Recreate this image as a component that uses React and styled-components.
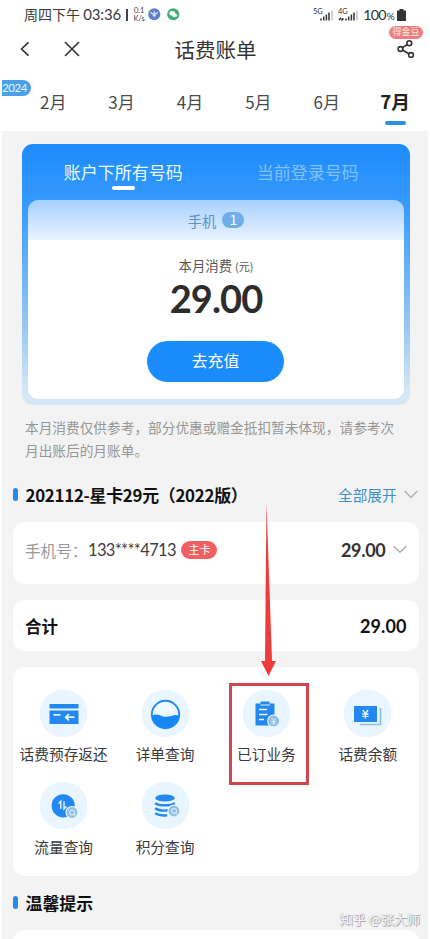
import React, { useState } from 'react';
import styled, { createGlobalStyle } from 'styled-components';

const GlobalStyle = createGlobalStyle`
  * {
    box-sizing: border-box;
  }
  body {
    margin: 0;
    background: #fff;
    font-family: 'Noto Sans CJK SC', sans-serif;
    color: #333;
  }
  button {
    font-family: inherit;
    border: 0;
    padding: 0;
    background: none;
  }
`;

const Page = styled.div`
  position: relative;
  width: 430px;
  height: 939px;
  overflow: hidden;
  background: #fff;
`;

const StatusBar = styled.div`
  display: flex;
  align-items: center;
  height: 29px;
  padding: 0 24px 0 24px;
`;

const Clock = styled.span`
  font-size: 14px;
  line-height: 29px;
  white-space: nowrap;
  color: #3c3c3c;

  b {
    font: 400 15px 'Lato', sans-serif;
    letter-spacing: -0.1px;
  }
`;

const Divider = styled.span`
  width: 1.5px;
  height: 12px;
  margin: 0 5.5px 0 5px;
  background: #444;
`;

const Speed = styled.span`
  display: flex;
  flex-direction: column;
  align-items: center;
  width: 12px;
  margin-right: 3px;
  font: 7.5px/7.5px 'Lato', sans-serif;
  color: #444;
`;

const StatusDot = styled.svg`
  width: 12.5px;
  height: 12.5px;
  margin-right: 6.5px;
`;

const StatusRight = styled.div`
  display: flex;
  align-items: center;
  margin-left: auto;
`;

const Signal = styled.svg`
  width: 20px;
  height: 15px;
  margin-right: 5px;
`;

const Battery = styled.span`
  margin-right: 3px;
  font: 14.3px 'Lato', sans-serif;
  letter-spacing: -0.8px;
  color: #333;

  small {
    margin-left: 1px;
    font-size: 10px;
  }
`;

const NavBar = styled.div`
  position: relative;
  display: flex;
  align-items: center;
  height: 40px;
  padding: 0 15px 0 19px;
`;

const NavIcon = styled.svg`
  width: ${(props) => props.$size}px;
  height: ${(props) => props.$size}px;
  margin-right: ${(props) => props.$gap || 0}px;
  fill: none;
  stroke: #333;
  stroke-width: 1.6;
`;

const NavTitle = styled.h1`
  margin: 0 auto 0 94.5px;
  font-size: 20.5px;
  font-weight: 400;
  line-height: 40px;
`;

const GoldTag = styled.span`
  position: absolute;
  top: -3px;
  right: 7px;
  width: 34px;
  height: 12.5px;
  border-radius: 7px;
  background: #ed7f7f;
  color: #ffe9e6;
  font-size: 9px;
  line-height: 12px;
  text-align: center;
`;

const MonthTabs = styled.div`
  position: relative;
  display: grid;
  grid-template-columns: repeat(6, 68.4px);
  height: 62px;
  padding-left: 19px;
`;

const YearTag = styled.span`
  position: absolute;
  top: 11px;
  left: 2px;
  width: 28.5px;
  height: 16px;
  border-radius: 0 8px 8px 0;
  background: #4d9fe8;
  color: #e4f8ff;
  font: 11.5px/16px 'Lato', sans-serif;
  letter-spacing: -0.4px;
`;

const MonthTab = styled.button`
  display: flex;
  flex-direction: column;
  align-items: center;
  padding-top: ${(props) => (props.$active ? 19 : 19.5)}px;
  font-size: ${(props) => (props.$active ? 18.7 : 17)}px;
  font-weight: ${(props) => (props.$active ? 700 : 400)};
  line-height: 26px;
  color: ${(props) => (props.$active ? '#222' : '#4a4a4a')};

  &::after {
    content: '';
    width: 21px;
    height: 4px;
    margin-top: 6.5px;
    border-radius: 2px;
    background: ${(props) => (props.$active ? '#2f8fe0' : 'transparent')};
  }
`;

const Body = styled.main`
  height: 808px;
  margin: 0 2px;
  padding: 13px 9.5px 0 11px;
  background: #f3f3f3;
`;

const AccountCard = styled.section`
  height: 260.5px;
  margin: 0 8.5px 0 9px;
  padding: 0 6px;
  border-radius: 11px;
  background: linear-gradient(#1c8bfc 0, #3599fd 56px, #65b0f6 120px, #9ecaf4 190px, #d5e6f6 245px);
`;

const AccountTabs = styled.div`
  display: flex;
  height: 56px;
  padding-left: 3px;
`;

const AccountTab = styled.button`
  display: flex;
  flex-direction: column;
  align-items: center;
  width: 184.5px;
  padding-top: 14px;
  color: ${(props) => (props.$active ? '#e8fbff' : '#82c1fc')};
  font-size: 17px;
  line-height: 28px;

  &::after {
    content: '';
    width: 23px;
    height: 4px;
    border-radius: 2px;
    background: ${(props) => (props.$active ? '#fff' : 'transparent')};
  }
`;

const AccountPanel = styled.div`
  display: flex;
  flex-direction: column;
  align-items: center;
  height: 199px;
  border-radius: 10px;
  background: linear-gradient(#a6d0ff, #e9f4ff 40px, #fff 40px);
`;

const PhoneLabel = styled.div`
  display: flex;
  align-items: center;
  height: 40px;
  color: #5b92c8;
  font-size: 14.3px;
`;

const CountBadge = styled.span`
  width: 22px;
  height: 16px;
  margin-left: 6px;
  border-radius: 8px;
  background: #6fafe9;
  color: #fff;
  font-size: 14px;
  line-height: 15px;
  text-align: center;
`;

const CostLabel = styled.div`
  height: 22px;
  margin-top: 14px;
  font-size: 13.4px;
  line-height: 22px;
  color: #555;

  small {
    font-size: 11px;
  }
`;

const Cost = styled.strong`
  height: 40px;
  margin-top: 1.5px;
  font: 700 38px/40px 'Lato', 'Noto Sans CJK SC', sans-serif;
  letter-spacing: -0.9px;
  color: #2d2d2d;
`;

const PayButton = styled.button`
  width: 137px;
  height: 40.5px;
  margin-top: 23.5px;
  margin-right: 1px;
  border-radius: 21px;
  background: #1b8cfc;
  color: #fff;
  font-size: 15.8px;
  line-height: 40px;
`;

const Note = styled.p`
  width: 380px;
  margin: 11px 0 0 12px;
  color: #969696;
  font-size: 13.68px;
  line-height: 23px;
`;

const SectionHead = styled.div`
  display: flex;
  align-items: center;
  height: 30px;
  margin-top: ${(props) => props.$top}px;
  padding-right: 1px;
`;

const Marker = styled.span`
  width: 5px;
  height: 12.5px;
  margin-right: 7.5px;
  border-radius: 3px;
  background: #258bea;
`;

const SectionTitle = styled.h2`
  margin: 0 auto 0 0;
  font-size: 16.9px;
  line-height: 30px;
  letter-spacing: ${(props) => props.$spacing || 0}px;
  color: #111;
  white-space: nowrap;
`;

const ExpandLink = styled.button`
  display: flex;
  align-items: center;
  gap: 7px;
  color: #3c8fc8;
  font-size: 14.6px;
`;

const Card = styled.section`
  display: flex;
  align-items: center;
  height: ${(props) => props.$height}px;
  margin-top: ${(props) => props.$top}px;
  padding: 0 12px ${(props) => props.$bottom || 0}px;
  border-radius: 12px;
  background: #fff;
`;

const FieldLabel = styled.span`
  color: #999;
  font-size: 15.6px;
  width: 63px;
  white-space: nowrap;
`;

const PhoneNumber = styled.span`
  font: 16.5px 'Lato', sans-serif;
  letter-spacing: -0.65px;
  color: #3d3d3d;
`;

const MainCardTag = styled.span`
  width: 36px;
  height: 18px;
  margin-left: 5.5px;
  border-radius: 9px;
  background: #f06062;
  color: #fff;
  font-size: 11px;
  line-height: 17px;
  text-align: center;
`;

const Amount = styled.span`
  margin-left: auto;
  margin-right: ${(props) => props.$gap || 0}px;
  color: ${(props) => (props.$strong ? '#111' : '#333')};
  font: 700 18px 'Lato', sans-serif;
  letter-spacing: ${(props) => (props.$strong ? 0.1 : -0.3)}px;
`;

const TotalLabel = styled.b`
  font-size: 16.5px;
  color: #111;
`;

const ServiceGrid = styled.section`
  display: grid;
  grid-template-columns: repeat(4, 1fr);
  grid-auto-rows: 92.5px;
  height: 208.5px;
  margin-top: 16px;
  padding-top: 22.5px;
  border-radius: 12px;
  background: #fff;
`;

const Service = styled.div`
  position: relative;
  display: flex;
  flex-direction: column;
  align-items: center;
`;

const ServiceIcon = styled.svg`
  width: 47px;
  height: 47px;
  border-radius: 22px;
  background: #e9f5ff;
`;

const ServiceLabel = styled.span`
  margin-top: 5.5px;
  color: #3a3a3a;
  font-size: 14.7px;
  line-height: 23px;
  white-space: nowrap;
`;

const Highlight = styled.div`
  position: absolute;
  top: -6.5px;
  left: 50%;
  width: 80px;
  height: 102px;
  margin-left: -37.5px;
  border: 3px solid #cf464c;
`;

const Arrow = styled.svg`
  position: absolute;
  top: 503px;
  left: 260px;
  width: 18px;
  height: 174px;
`;

const Watermark = styled.span`
  position: absolute;
  right: 10px;
  bottom: 9px;
  color: #f4f4f4;
  font-size: 13px;
  line-height: 22px;
  text-shadow: 1px 1px 0 #aaa, -0.5px -0.5px 0 #bbb;
`;

const Chevron = () => (
  <svg width="14" height="9" viewBox="0 0 14 9" fill="none" stroke="#aaa" strokeWidth="1.3">
    <path d="M0.7 1L7 7.4L13.3 1" />
  </svg>
);

const SignalBars = ({ label, arrows }) => (
  <Signal viewBox="0 0 20 15">
    <text x="0" y="6.5" fontSize="7.5" fontFamily="Lato, sans-serif" fill="#333">{label}</text>
    <path d="M8 13.5v-2M10.7 13.5v-4M13.4 13.5v-6M16 13.5V5.5" stroke="#333" strokeWidth="1.5" />
    <path d="M19 13.5V3.5" stroke="#bbb" strokeWidth="1.3" />
    {arrows && <path d="M1 13l2-2.3M3.5 13.5l1.8-2.3" stroke="#333" strokeWidth="1.7" />}
  </Signal>
);

const PrepaidIcon = () => (
  <>
    <path d="M9.5 14h29v4.5h-29zM9.5 20.5h29v13.5h-29z" fill="#2389f1" />
    <path d="M13.5 24.8h7M26 27.2h8.5M29 24l-3.4 3.2L29 30.4" fill="none" stroke="#e8f5ff" strokeWidth="1.7" />
  </>
);

const DetailIcon = () => (
  <>
    <circle cx="23.5" cy="24.5" r="13.7" fill="#eef8ff" stroke="#2389f1" strokeWidth="1.9" />
    <path d="M10 26c3.5-2.8 7-1 11 .4c5 1.6 9-1.4 13-1.3c1.5.1 2.5.6 3.3 1.1a13.8 13.8 0 0 1-27.3-.2z" fill="#1689f7" />
  </>
);

const OrderedIcon = () => (
  <>
    <path d="M12.5 13.5h5v-2h9v2h5v22h-19z" fill="#2389f1" />
    <path d="M17.5 15h9.3" stroke="#e9f5ff" strokeWidth="1" />
    <path d="M16 19.5h8M16 24.5h8.5M16 29.5h5" stroke="#e9f5ff" strokeWidth="1.5" />
    <circle cx="30.7" cy="31" r="6" fill="#8bbde9" stroke="#e9f5ff" strokeWidth="1.2" />
    <path d="M28.7 28l2 2.7l2-2.7M30.7 30.7v4M28.5 31.3h4.4M28.5 33h4.4" fill="none" stroke="#e4f2ff" strokeWidth="0.9" />
  </>
);

const BalanceIcon = () => (
  <>
    <path d="M35.5 19h1v15.5H16" fill="none" stroke="#90c2e9" strokeWidth="1.7" />
    <path d="M10 16h23v16H10z" fill="#2389f1" />
    <path d="M18.7 20l2.7 3.5l2.7-3.5M21.4 23.5v5M18.3 24h6.2M18.3 26.3h6.2" fill="none" stroke="#e9f5ff" strokeWidth="1.3" />
  </>
);

const SmallLens = ({ x, y }) => (
  <g transform={`translate(${x} ${y})`}>
    <circle r="6" fill="#8fc0e9" stroke="#e9f5ff" strokeWidth="1.2" />
    <circle r="2.5" fill="none" stroke="#e9f5ff" strokeWidth="1" />
    <path d="M1.7 1.7l2.2 2.2" stroke="#e9f5ff" strokeWidth="1" />
  </g>
);

const DataIcon = () => (
  <>
    <circle cx="23.2" cy="23.8" r="11.6" fill="#2389f1" />
    <path d="M18.6 21.5l2.2-2.2v7.7M24 19.3v7.7l2.4-2.4" fill="none" stroke="#eaf6ff" strokeWidth="1.4" />
    <SmallLens x={32} y={30.5} />
  </>
);

const PointsIcon = () => (
  <>
    <ellipse cx="23" cy="16" rx="9.8" ry="3.6" fill="#2389f1" />
    <path d="M13.2 21.2c3.5 2.8 16 2.8 19.6 0M13.2 26.2c3 2.3 9 2.7 13.5 2M13.2 31.2c3 2 8 2.5 12 2" fill="none" stroke="#2389f1" strokeWidth="2.4" />
    <SmallLens x={32} y={29} />
  </>
);

const months = ['2月', '3月', '4月', '5月', '6月', '7月'];

const services = [
  { name: '话费预存返还', icon: PrepaidIcon },
  { name: '详单查询', icon: DetailIcon },
  { name: '已订业务', icon: OrderedIcon, highlight: true },
  { name: '话费余额', icon: BalanceIcon },
  { name: '流量查询', icon: DataIcon },
  { name: '积分查询', icon: PointsIcon },
];

const App = () => {
  const [month, setMonth] = useState('7月');
  const [tab, setTab] = useState(0);

  return (
    <Page>
      <GlobalStyle />
      <StatusBar>
        <Clock>周四下午 <b>03:36</b></Clock>
        <Divider />
        <Speed><span>0.1</span><span>K/s</span></Speed>
        <StatusDot viewBox="0 0 13 13">
          <circle cx="6.5" cy="6.5" r="6.3" fill="#6380c5" />
          <path d="M2.7 4.5c1 2.5 6.5 2.5 7.6 0M6.5 3.5v6M4.6 7.5h3.8" fill="none" stroke="#dce8ff" strokeWidth="1.2" />
        </StatusDot>
        <StatusDot viewBox="0 0 13 13">
          <circle cx="6.5" cy="6.5" r="6.3" fill="#42ad76" />
          <ellipse cx="5.5" cy="5.5" rx="3" ry="2.4" fill="#fff" />
          <ellipse cx="8" cy="7.6" rx="2.6" ry="2" fill="#e4fff0" />
        </StatusDot>
        <StatusRight>
          <SignalBars label="5G" />
          <SignalBars label="4G" arrows />
          <Battery>100<small>%</small></Battery>
          <svg width="9" height="12" viewBox="0 0 9 12">
            <path d="M2.5 0h4v1.5H9V12H0V1.5h2.5z" fill="#333" />
          </svg>
        </StatusRight>
      </StatusBar>

      <NavBar>
        <NavIcon $size={16} $gap={29} viewBox="0 0 16 16">
          <path d="M9.5 1.3L2.5 8l7 6.7" />
        </NavIcon>
        <NavIcon $size={16} viewBox="0 0 16 16">
          <path d="M1 1l14 14M15 1L1 15" />
        </NavIcon>
        <NavTitle>话费账单</NavTitle>
        <NavIcon $size={18} viewBox="0 0 18 18">
          <circle cx="3.5" cy="9" r="2.4" />
          <circle cx="12.3" cy="3.2" r="2.4" />
          <circle cx="14" cy="15" r="2.4" />
          <path d="M5.5 7.6l4.8-3.1M5.6 10l6.2 3.8" />
        </NavIcon>
        <GoldTag>得金豆</GoldTag>
      </NavBar>

      <MonthTabs>
        <YearTag>2024</YearTag>
        {months.map((item) => (
          <MonthTab key={item} $active={item === month} onClick={() => setMonth(item)}>{item}</MonthTab>
        ))}
      </MonthTabs>

      <Body>
        <AccountCard>
          <AccountTabs>
            <AccountTab $active={tab === 0} onClick={() => setTab(0)}>账户下所有号码</AccountTab>
            <AccountTab $active={tab === 1} onClick={() => setTab(1)}>当前登录号码</AccountTab>
          </AccountTabs>
          <AccountPanel>
            <PhoneLabel>手机<CountBadge>1</CountBadge></PhoneLabel>
            <CostLabel>本月消费 <small>(元)</small></CostLabel>
            <Cost>29.00</Cost>
            <PayButton>去充值</PayButton>
          </AccountPanel>
        </AccountCard>

        <Note>本月消费仅供参考，部分优惠或赠金抵扣暂未体现，请参考次月出账后的月账单。</Note>

        <SectionHead $top={18}>
          <Marker />
          <SectionTitle $spacing={-0.28}>202112-星卡29元（2022版）</SectionTitle>
          <ExpandLink>全部展开<Chevron /></ExpandLink>
        </SectionHead>

        <Card $height={62.5} $top={12} $bottom={6}>
          <FieldLabel>手机号：</FieldLabel>
          <PhoneNumber>133****4713</PhoneNumber>
          <MainCardTag>主卡</MainCardTag>
          <Amount $gap={7}>29.00</Amount>
          <Chevron />
        </Card>

        <Card $height={51} $top={16}>
          <TotalLabel>合计</TotalLabel>
          <Amount $strong>29.00</Amount>
        </Card>

        <ServiceGrid>
          {services.map(({ name, icon: Icon, highlight }) => (
            <Service key={name}>
              <ServiceIcon viewBox="0 0 47 47"><Icon /></ServiceIcon>
              <ServiceLabel>{name}</ServiceLabel>
              {highlight && <Highlight />}
            </Service>
          ))}
        </ServiceGrid>

        <SectionHead $top={12}>
          <Marker />
          <SectionTitle>温馨提示</SectionTitle>
        </SectionHead>
        <Card $height={60} $top={12} />
      </Body>

      <Arrow viewBox="0 0 18 174">
        <path d="M6.5 0L12 158H16L8.5 173L1 158H5z" fill="#ee3b3b" />
      </Arrow>
      <Watermark>知乎 @张大师</Watermark>
    </Page>
  );
};

export default App;
